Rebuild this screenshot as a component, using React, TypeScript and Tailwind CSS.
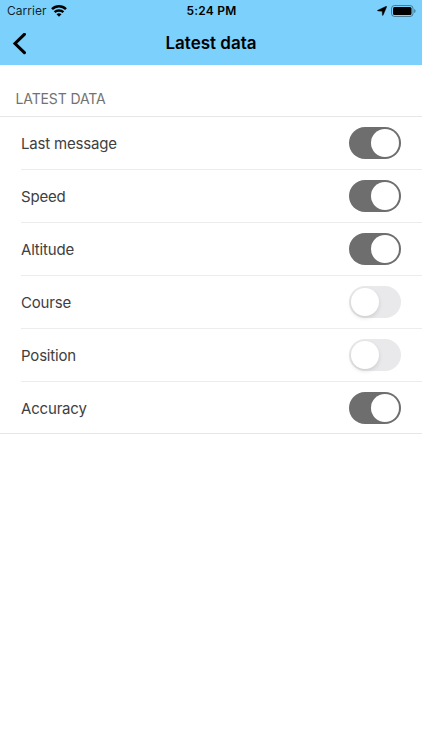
import React, { useState } from 'react';

interface Setting {
  label: string;
  enabled: boolean;
}

const initialSettings: Setting[] = [
  { label: 'Last message', enabled: true },
  { label: 'Speed', enabled: true },
  { label: 'Altitude', enabled: true },
  { label: 'Course', enabled: false },
  { label: 'Position', enabled: false },
  { label: 'Accuracy', enabled: true },
];

const StatusBar = () => (
  <div className="grid h-[22px] grid-cols-3 items-center pl-[7px] pr-[6px] text-[12px]">
    <div className="flex items-center gap-1">
      <span className="w-[40px] tracking-[0.03px] text-black/85">Carrier</span>
      <svg width="16" height="12" viewBox="0 0 16 12" fill="none" stroke="#000" strokeWidth="2.5">
        <path d="M1 4.2C5 .3 11 .3 15 4.2" />
        <path d="M3.6 7.1C6 4.8 10 4.8 12.4 7.1" />
        <path d="M8 11.7 5.5 9.3C7 8 9 8 10.5 9.3Z" fill="#000" stroke="none" />
      </svg>
    </div>
    <span className="text-center font-semibold tracking-[0.22px]">5:24 PM</span>
    <div className="flex items-center justify-end gap-1">
      <svg width="10" height="10" viewBox="0 0 10 10" stroke="#000" strokeWidth=".4">
        <path d="M9.2.3Q9.9.1 9.6.9L6.1 9.2Q5.6 10 5.4 9.1L5.2 5.2.9 4.9Q-.1 4.6.8 4.2Z" />
      </svg>
      <svg width="25" height="12" viewBox="0 0 25 12">
        <rect x=".5" y=".5" width="21.5" height="11" rx="3" fill="none" stroke="#000" strokeOpacity=".4" />
        <rect x="2" y="2" width="18.5" height="8" rx="1.5" />
        <path d="M23.3 4v4c1.6-.6 1.6-3.4 0-4Z" fillOpacity=".5" />
      </svg>
    </div>
  </div>
);

const Toggle: React.FC<{ label: string; enabled: boolean; onChange: () => void }> = ({ label, enabled, onChange }) => (
  <button
    role="switch"
    aria-checked={enabled}
    aria-label={label}
    onClick={onChange}
    className={`flex h-8 w-[52px] items-center rounded-full p-[2px] ${enabled ? 'justify-end bg-[#6e6e6e]' : 'justify-start bg-[#e9e9eb]'}`}
  >
    <span className={`h-7 w-7 rounded-full bg-white ${enabled ? '' : 'shadow-[0_2px_4px_rgba(0,0,0,0.12)]'}`} />
  </button>
);

export default function App() {
  const [settings, setSettings] = useState(initialSettings);

  const toggle = (index: number) => {
    setSettings(settings.map((s, i) => (i === index ? { ...s, enabled: !s.enabled } : s)));
  };

  return (
    <div className="min-h-screen bg-white font-['Inter','Liberation_Sans',sans-serif] text-black">
      <header className="h-[65px] bg-[#7bd1fb]">
        <StatusBar />
        <div className="grid h-[43px] grid-cols-[60px_1fr_60px] items-center">
          <button aria-label="Back" className="pl-3">
            <svg width="16" height="22" viewBox="0 0 16 22" fill="none" stroke="#000" strokeWidth="3.1" strokeLinecap="round">
              <path d="M12.4 1.3 3 10.5l9.4 9.2" />
            </svg>
          </button>
          <h1 className="text-center text-[17px] font-semibold">Latest data</h1>
        </div>
      </header>

      <main>
        <h2 className="flex h-[52px] items-end border-b border-[#e6e6e8] pb-[7px] pl-[15.5px] text-[14px] tracking-[-0.12px] text-[#727272]">
          LATEST DATA
        </h2>
        <ul className="border-b border-[#e6e6e8]">
          {settings.map((s, i) => (
            <li key={s.label} className="pl-[21px]">
              <div className={`flex items-center justify-between pr-[21px] ${i < settings.length - 1 ? 'h-[53px] border-b border-[#ececee]' : 'h-[51px] pt-px'}`}>
                <span className="pt-[2px] text-[15px] tracking-[-0.18px] text-[#404040]">{s.label}</span>
                <Toggle label={s.label} enabled={s.enabled} onChange={() => toggle(i)} />
              </div>
            </li>
          ))}
        </ul>
      </main>
    </div>
  );
}
